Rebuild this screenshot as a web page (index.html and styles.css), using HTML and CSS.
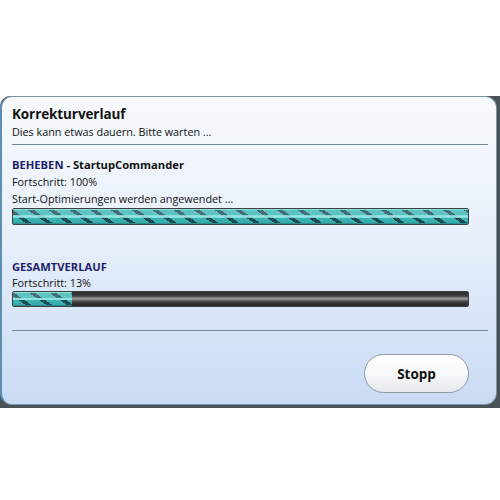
FILE: index.html
```html
<!DOCTYPE html>
<html lang="de">
<head>
<meta charset="utf-8">
<link rel="stylesheet" href="styles.css">
</head>
<body>
<div class="stage">
  <div class="frame">
    <div class="panel">
      <div class="title">Korrekturverlauf</div>
      <div class="subtitle">Dies kann etwas dauern. Bitte warten ...</div>
      <div class="rule"></div>

      <div class="section first">
        <div class="heading"><span class="key">BEHEBEN</span> - StartupCommander</div>
        <div class="text">Fortschritt: 100%</div>
        <div class="text">Start-Optimierungen werden angewendet ...</div>
        <div class="bar"><div class="fill" style="width:100%"></div></div>
      </div>

      <div class="section second">
        <div class="heading"><span class="key">GESAMTVERLAUF</span></div>
        <div class="text">Fortschritt: 13%</div>
        <div class="bar"><div class="fill" style="width:13%"></div></div>
      </div>

      <div class="rule lower"></div>

      <div class="actions">
        <button class="stop">Stopp</button>
      </div>
    </div>
  </div>
</div>
</body>
</html>
```
FILE: styles.css
```css
html, body {
  margin: 0;
  padding: 0;
  background: #ffffff;
}

body {
  font-family: "Open Sans", "Noto Sans", "Liberation Sans", sans-serif;
  color: #111;
}

.stage {
  padding-top: 96px;
}

.frame {
  width: 500px;
  height: 312px;
  background: #4a5157;
  border-top-left-radius: 10px;
  box-sizing: border-box;
  padding: 0 3px 3px 0;
}

.panel {
  height: 100%;
  box-sizing: border-box;
  border: 1px solid #7d95a8;
  border-left: 2px solid #5f8fb0;
  border-radius: 12px;
  background: linear-gradient(to bottom, #f7fafd 0%, #eaf1fa 40%, #c9dbf5 100%);
  padding: 8px 9px 0 10px;
  display: flex;
  flex-direction: column;
}

.title {
  font-size: 13.5px;
  font-weight: 700;
  line-height: 18px;
  letter-spacing: -0.1px;
}

.subtitle {
  font-size: 10.8px;
  line-height: 17px;
}

.rule {
  height: 1px;
  background: #6d8797;
  margin-top: 4px;
  width: 476px;
}

.section.first {
  margin-top: 12px;
}

.section.second {
  margin-top: 34px;
}

.heading {
  font-size: 11.2px;
  font-weight: 700;
  line-height: 16px;
}

.key {
  color: #1d1e6b;
}

.text {
  font-size: 10.8px;
  line-height: 17px;
}

.bar {
  margin-top: 1px;
  width: 457px;
  height: 17px;
  box-sizing: border-box;
  border: 1px solid #3b4143;
  border-radius: 2px;
  overflow: hidden;
  background: linear-gradient(to bottom,
    #2e2e2e 0%, #3e3e3e 30%, #8d8d8d 42%, #9a9a9a 50%, #5a5a5a 62%, #333 80%, #2a2a2a 100%);
}

.second .text {
  line-height: 15px;
}

.second .bar {
  height: 16px;
}

.fill {
  height: 100%;
  background:
    linear-gradient(to bottom,
      rgba(255,255,255,0) 0%, rgba(255,255,255,0) 40%,
      rgba(150,230,230,0.95) 44%, rgba(150,230,230,0.95) 56%,
      rgba(255,255,255,0) 60%, rgba(255,255,255,0) 100%),
    linear-gradient(to bottom,
      rgba(255,255,255,0.18) 0%, rgba(255,255,255,0.18) 45%,
      rgba(0,0,0,0) 55%, rgba(0,0,0,0.08) 100%),
    repeating-linear-gradient(35deg,
      #3ab7b5 0px, #3ab7b5 8px,
      #1e4e56 8px, #1e4e56 11.5px,
      #3ab7b5 11.5px, #3ab7b5 11.9px),
    #3ab7b5;
  box-shadow: inset 0 1px 0 #8be0df, inset 0 -1px 0 #2b8e8c;
}

.rule.lower {
  margin-top: 23px;
}

.actions {
  display: flex;
  justify-content: flex-end;
  margin-top: 23px;
  padding-right: 18px;
}

.stop {
  width: 105px;
  height: 39px;
  border-radius: 20px;
  border: 1px solid #8f9ba4;
  background: linear-gradient(to bottom, #ffffff 0%, #f7f8f9 50%, #e6e9ec 100%);
  font-family: "Open Sans", "Noto Sans", sans-serif;
  font-size: 13.5px;
  font-weight: 700;
  color: #111;
  padding: 0;
  box-shadow: inset 0 1px 0 #fff;
}
```
